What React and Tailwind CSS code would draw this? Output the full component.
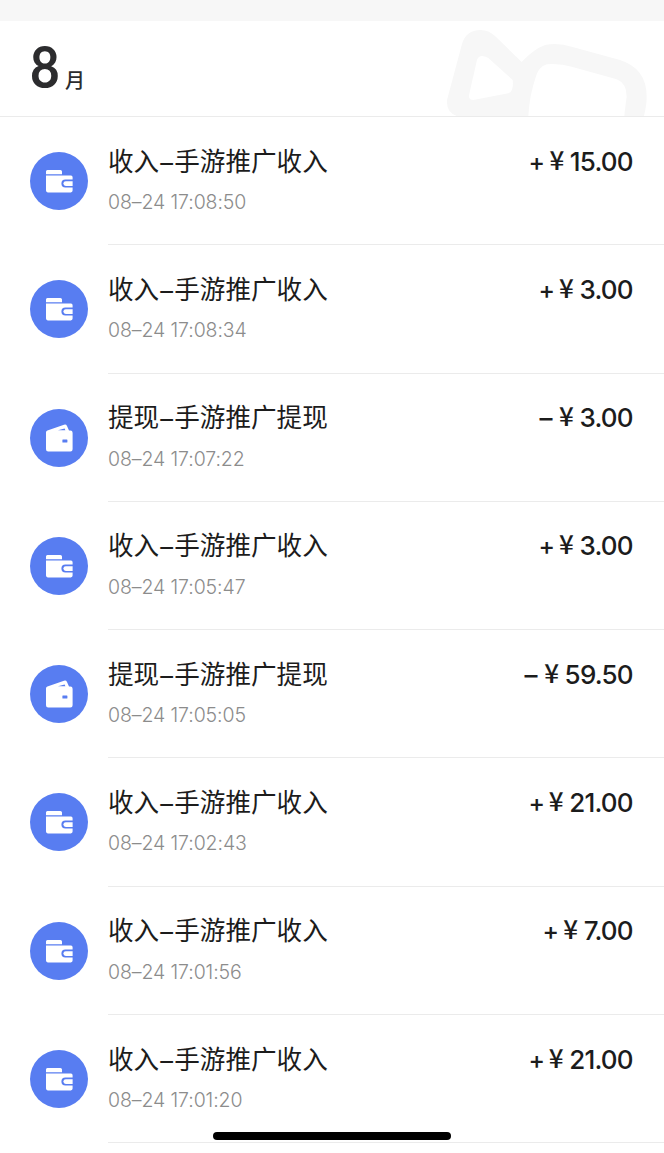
import { clsx } from "clsx";

const records = [
  { type: "income", title: ["收入", "手游推广收入"], time: "08–24 17:08:50", amount: "15.00" },
  { type: "income", title: ["收入", "手游推广收入"], time: "08–24 17:08:34", amount: "3.00" },
  { type: "withdraw", title: ["提现", "手游推广提现"], time: "08–24 17:07:22", amount: "3.00" },
  { type: "income", title: ["收入", "手游推广收入"], time: "08–24 17:05:47", amount: "3.00" },
  { type: "withdraw", title: ["提现", "手游推广提现"], time: "08–24 17:05:05", amount: "59.50" },
  { type: "income", title: ["收入", "手游推广收入"], time: "08–24 17:02:43", amount: "21.00" },
  { type: "income", title: ["收入", "手游推广收入"], time: "08–24 17:01:56", amount: "7.00" },
  { type: "income", title: ["收入", "手游推广收入"], time: "08–24 17:01:20", amount: "21.00" },
];

function IncomeIcon() {
  return (
    <svg viewBox="0 0 58 58" className="h-[58px] w-[58px]" aria-hidden="true">
      <circle cx="29" cy="29" r="29" fill="#587df1" />
      <path d="M17.4 18h13a1.6 1.6 0 0 1 1.6 1.6V22.2H16v-2.6a1.6 1.6 0 0 1 1.4-1.6Z" fill="#fff" />
      <path
        d="M16 23.6h25a1.6 1.6 0 0 1 1.6 1.6v2.4h-7.2a4 4 0 0 0 0 8h7.2v3a1.8 1.8 0 0 1-1.8 1.8h-23a1.8 1.8 0 0 1-1.8-1.8Z"
        fill="#fff"
      />
      <path d="M42.6 29.2h-6.8a2.4 2.4 0 0 0 0 4.8h6.8Z" fill="#fff" />
    </svg>
  );
}

function WithdrawIcon() {
  return (
    <svg viewBox="0 0 58 58" className="h-[58px] w-[58px]" aria-hidden="true">
      <circle cx="29" cy="29" r="29" fill="#587df1" />
      <path
        fillRule="evenodd"
        d="M17.4 21.4 34 15.8a2.4 2.4 0 0 1 3 1.2l2 4.5h1.4a2.2 2.2 0 0 1 2.2 2.2v16.5a2.2 2.2 0 0 1-2.2 2.2H18.2a2.2 2.2 0 0 1-2.2-2.2V23.5a2.2 2.2 0 0 1 1.4-2.1ZM28 21.3h7.4l-.8-1.8Z"
        fill="#fff"
      />
      <rect x="32.4" y="30.4" width="5" height="3" rx=".5" fill="#587df1" />
    </svg>
  );
}

function CameraMark() {
  return (
    <svg
      viewBox="0 0 702 348"
      className="absolute right-0 bottom-0 h-[116px] w-[234px]"
      aria-hidden="true"
    >
      <path
        fillRule="evenodd"
        fill="#f7f7f7"
        d="M51 300 96 132Q108 90 152 90q24 0 43 18l80 78q35-38 70-51 40-8 80 5l145 40q80 25 80 110 0 25-8 58h-59q2-23 7-58 0-40-30-52l-135-38q-35-10-75-7-25 7-34 42-18 55-21 113H80q-32-12-29-48ZM141 180l-24 105q-2 15 13 15l105-20q17-6 13-40l-73-66q-27-14-34 6Z"
      />
    </svg>
  );
}

function RecordRow({ type, title, time, amount }) {
  const isIncome = type === "income";

  return (
    <li className="flex h-[128.3px] pl-[30px]">
      <div className="mt-[35px] mr-5 shrink-0">{isIncome ? <IncomeIcon /> : <WithdrawIcon />}</div>
      <div className="flex min-w-0 flex-1 justify-between border-b border-[#ebebeb] pr-8">
        <div className="pt-[26.6px]">
          <h3 className="flex h-9 items-center text-[25.6px] leading-9 text-[#1c1c1c]">
            {title[0]}
            <span className="w-[15px] pt-0.5 text-center">–</span>
            {title[1]}
          </h3>
          <p className="mt-[7.4px] text-[19.5px] leading-[30px] font-light tracking-[-0.1px] text-[#8c8c8c]">
            {time}
          </p>
        </div>
        <p className="flex h-9 pt-[25.6px] text-[26px] leading-9 font-medium text-[#1c1c1c]">
          <span className={clsx(isIncome ? "-mr-0.5 scale-95 pt-0.5" : "mr-px pt-px")}>
            {isIncome ? "+" : "–"}
          </span>
          <span className="-mt-0.5 w-[26px] text-center font-['Noto_Sans_CJK_SC',sans-serif]">¥</span>
          <span className="-mr-[0.8px] pt-px tracking-[-0.8px]">{amount}</span>
        </p>
      </div>
    </li>
  );
}

export default function App() {
  return (
    <main className="relative h-[1153px] overflow-hidden bg-white font-[Inter,'Noto_Sans_CJK_SC',sans-serif]">
      <div className="h-[21px] bg-[#f7f7f7]" />
      <header className="relative flex h-24 items-baseline border-b border-[#ebebeb] pl-[30px] text-[#2c2c2e]">
        <CameraMark />
        <span className="w-[35px] origin-left scale-x-90 font-[Lato,sans-serif] text-[57px] leading-[90px] font-bold">
          8
        </span>
        <span className="text-[20px] font-medium">月</span>
      </header>
      <ul>
        {records.map((record) => (
          <RecordRow key={record.time} {...record} />
        ))}
      </ul>
      <div className="absolute bottom-[13px] left-[213px] h-2 w-[238px] rounded-full bg-black" />
    </main>
  );
}
